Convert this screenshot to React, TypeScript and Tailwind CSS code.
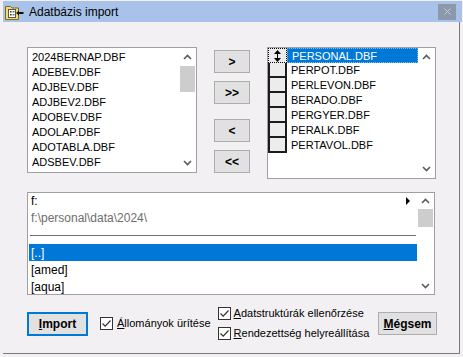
import React from "react";

const leftFiles = [
  "2024BERNAP.DBF",
  "ADEBEV.DBF",
  "ADJBEV.DBF",
  "ADJBEV2.DBF",
  "ADOBEV.DBF",
  "ADOLAP.DBF",
  "ADOTABLA.DBF",
  "ADSBEV.DBF",
];

const rightFiles = [
  "PERSONAL.DBF",
  "PERPOT.DBF",
  "PERLEVON.DBF",
  "BERADO.DBF",
  "PERGYER.DBF",
  "PERALK.DBF",
  "PERTAVOL.DBF",
];

function Chevron({ down }: { down?: boolean }) {
  return (
    <svg width="9" height="6" viewBox="0 0 9 6">
      <polyline
        points={down ? "1,1 4.5,4.5 8,1" : "1,5 4.5,1.5 8,5"}
        fill="none"
        stroke="#5a5a5a"
        strokeWidth="1.6"
      />
    </svg>
  );
}

function VScroll({ btn, thumb }: { btn: number; thumb?: number }) {
  return (
    <div className="flex flex-col w-[17px] h-full shrink-0 bg-white">
      <div className="flex items-center justify-center" style={{ height: btn }}>
        <Chevron />
      </div>
      {thumb && <div className="mx-[1px] bg-[#cdcdcd]" style={{ height: thumb }} />}
      <div className="flex-1" />
      <div className="flex items-center justify-center" style={{ height: btn }}>
        <Chevron down />
      </div>
    </div>
  );
}

function MoveButton({ label }: { label: string }) {
  return (
    <div className="w-[36px] h-[23px] flex items-center justify-center bg-[#e1e1e1] border border-[#adadad] text-[12px] font-bold text-black">
      {label}
    </div>
  );
}

function CheckBox() {
  return (
    <div className="w-[13px] h-[13px] border border-[#333] bg-white flex items-center justify-center shrink-0">
      <svg width="11" height="11" viewBox="0 0 11 11">
        <polyline points="1.5,5.5 4.2,8.2 9.5,2.5" fill="none" stroke="#333" strokeWidth="1.2" />
      </svg>
    </div>
  );
}

function TitleIcon() {
  return (
    <svg width="19" height="16" viewBox="0 0 19 16">
      <path d="M0.5 2.5 H5.5 L7 4 H13.5 V15.5 H0.5 Z" fill="#f4dc6c" stroke="#7a6a20" />
      <rect x="3.5" y="5.5" width="7" height="8" fill="#fff" stroke="#555" />
      <rect x="5" y="7" width="1.5" height="1.5" fill="#333" />
      <rect x="5" y="10" width="1.5" height="1.5" fill="#333" />
      <line x1="7.5" y1="7.8" x2="9.5" y2="7.8" stroke="#333" />
      <line x1="7.5" y1="10.8" x2="9.5" y2="10.8" stroke="#333" />
      <path d="M11 9 L14 6.5 V8 H18.5 V10 H14 V11.5 Z" fill="#111" />
    </svg>
  );
}

function UpDownIcon() {
  return (
    <svg width="7" height="12" viewBox="0 0 7 12">
      <path d="M3.5 0 L7 4 H0 Z" fill="#000" />
      <path d="M3.5 12 L7 8 H0 Z" fill="#000" />
      <rect x="3" y="3" width="1" height="6" fill="#000" />
    </svg>
  );
}

export default function App() {
  return (
    <div className="w-[463px] h-[357px] bg-[#f2f0f2] overflow-hidden font-['Liberation_Sans',Arial,sans-serif] text-black pl-[3px] pt-[1px]">
      {/* title bar */}
      <div className="w-[459px] h-[21px] bg-[#a8c2ea] flex items-center">
        <div className="ml-[2px] mt-[1px]">
          <TitleIcon />
        </div>
        <span className="ml-[5px] text-[12px]">Adatbázis import</span>
        <div className="ml-auto mr-[6px] w-[18px] h-[16px] bg-[#8c98ab] flex items-center justify-center">
          <svg width="7" height="7" viewBox="0 0 7 7">
            <path d="M0.5 0.5 L6.5 6.5 M6.5 0.5 L0.5 6.5" stroke="#c3cad8" strokeWidth="1" />
          </svg>
        </div>
      </div>

      {/* body */}
      <div className="w-[457px] h-[332px] border-r border-b border-[#7c7c7c] pl-[24px] pt-[25px]">
        <div className="flex items-start">
          {/* source list */}
          <div className="w-[170px] h-[126px] border border-[#a0a0a0] bg-white flex">
            <div className="flex-1 pt-[2px] pl-[4px] text-[11px]">
              {leftFiles.map((f) => (
                <div key={f} className="h-[15px] leading-[15px] whitespace-nowrap">
                  {f}
                </div>
              ))}
            </div>
            <VScroll btn={18} thumb={26} />
          </div>

          {/* move buttons */}
          <div className="ml-[17px] pt-[3px] flex flex-col">
            <MoveButton label=">" />
            <div className="mt-[8px]">
              <MoveButton label=">>" />
            </div>
            <div className="mt-[15px]">
              <MoveButton label="<" />
            </div>
            <div className="mt-[8px]">
              <MoveButton label="<<" />
            </div>
          </div>

          {/* target list */}
          <div className="ml-[17px] w-[169px] h-[132px] border border-[#a0a0a0] bg-white flex">
            <div className="flex-1 text-[11px]">
              {rightFiles.map((f, i) => (
                <div key={f} className="h-[15px] flex">
                  {i === 0 ? (
                    <div className="w-[19px] h-[15px] border border-dotted border-black bg-[#ececec] flex items-center justify-center">
                      <UpDownIcon />
                    </div>
                  ) : (
                    <div className="w-[19px] h-[15px] border-x-2 border-b-2 border-[#1c1c1c] bg-[#ececec]" />
                  )}
                  {i === 0 ? (
                    <div className="flex-1 bg-[#0078d7] text-white pl-[4px] leading-[15px] border border-dotted border-[#8ab8e8]">
                      {f}
                    </div>
                  ) : (
                    <div className="flex-1 pl-[4px] leading-[15px]">{f}</div>
                  )}
                </div>
              ))}
            </div>
            <VScroll btn={18} />
          </div>
        </div>

        {/* directory list */}
        <div className="mt-[13px] w-[408px] h-[103px] border border-[#a0a0a0] bg-white flex overflow-hidden">
          <div className="flex-1 text-[12px] pl-[1px]">
            <div className="h-[16px] flex items-center pl-[2px] pr-[7px]">
              <span>f:</span>
              <svg className="ml-auto" width="4" height="8" viewBox="0 0 4 8">
                <path d="M0 0 L4 4 L0 8 Z" fill="#000" />
              </svg>
            </div>
            <div className="h-[18px] flex items-center pl-[2px] text-[#6d6d6d]">f:\personal\data\2024\</div>
            <div className="pt-[8px] pb-[8px] pl-[1px] pr-[1px]">
              <div className="h-[1px] bg-[#707070]" />
            </div>
            <div className="h-[17px] flex items-center pl-[2px] bg-[#0078d7] text-white">[..]</div>
            <div className="h-[17px] flex items-center pl-[2px]">[amed]</div>
            <div className="h-[17px] flex items-center pl-[2px]">[aqua]</div>
          </div>
          <VScroll btn={16} thumb={18} />
        </div>

        {/* action row */}
        <div className="h-[57px] flex items-center">
          <div className="w-[61px] h-[24px] border-2 border-[#0078d7] bg-[#e1e1e1] flex items-center justify-center text-[12px] font-bold">
            <span>
              <span className="underline">I</span>mport
            </span>
          </div>
          <div className="ml-[12px] flex items-center text-[11px]">
            <CheckBox />
            <span className="ml-[4px]">
              <span className="underline">Á</span>llományok ürítése
            </span>
          </div>
          <div className="ml-[7px] flex flex-col text-[11px]">
            <div className="h-[20px] flex items-center">
              <CheckBox />
              <span className="ml-[3px]">
                <span className="underline">A</span>datstruktúrák ellenőrzése
              </span>
            </div>
            <div className="h-[20px] flex items-center">
              <CheckBox />
              <span className="ml-[3px]">
                <span className="underline">R</span>endezettség helyreállítása
              </span>
            </div>
          </div>
          <div className="ml-auto mr-[22px] w-[59px] h-[23px] border border-[#adadad] bg-[#e1e1e1] flex items-center justify-center text-[12px] font-bold">
            <span>
              <span className="underline">M</span>égsem
            </span>
          </div>
        </div>
      </div>
    </div>
  );
}
